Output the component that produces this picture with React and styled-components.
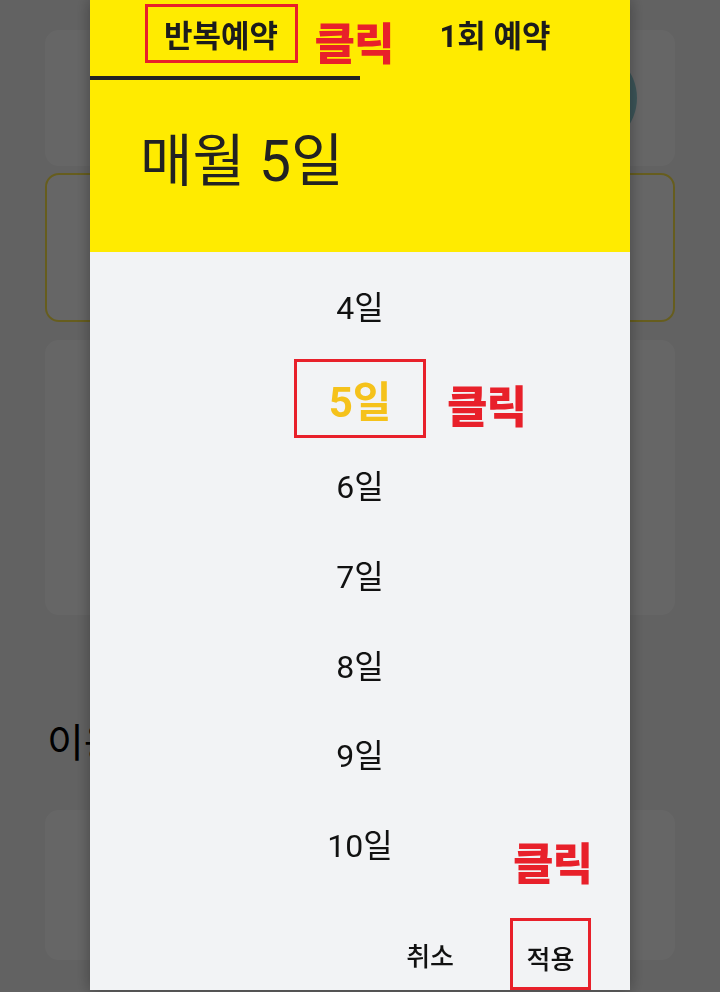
import styled, { createGlobalStyle } from "styled-components";

const GlobalStyle = createGlobalStyle`
  html, body {
    margin: 0;
    padding: 0;
    height: 100%;
    overflow: hidden;
  }
  body {
    font-family: Roboto, "Noto Sans CJK KR", sans-serif;
    color: #1a1a1a;
  }
  * {
    box-sizing: border-box;
  }
`;

// the page that sits behind the dimmed overlay
const Page = styled.div`
  min-height: 100vh;
  padding: 30px 45px 0;
  background: #f5f5f5;
  display: flex;
  flex-direction: column;
`;

const TopCard = styled.div`
  height: 136px;
  background: #fff;
  border-radius: 14px;
  display: flex;
  align-items: center;
  justify-content: flex-end;
  padding-right: 38px;
`;

const RoundButton = styled.div`
  width: 100px;
  height: 100px;
  border-radius: 50%;
  background: #96d4dc;
`;

const OptionCard = styled.div`
  margin-top: 7px;
  height: 149px;
  background: #fff;
  border: 2px solid #ffe94d;
  border-radius: 14px;
`;

const PlainCard = styled.div`
  margin-top: ${(p) => p.$gap}px;
  height: ${(p) => p.$h}px;
  background: #fff;
  border-radius: 14px;
`;

const SectionTitle = styled.h2`
  margin: 100px 0 0 2px;
  font-family: "Noto Sans CJK KR", sans-serif;
  font-size: 40px;
  font-weight: 400;
  line-height: 50px;
  color: #000;
`;

// dimmed overlay + picker dialog
const Overlay = styled.div`
  position: fixed;
  inset: 0;
  background: rgba(0, 0, 0, 0.6);
  display: flex;
  justify-content: center;
  align-items: flex-start;
  overflow: hidden;
`;

const Dialog = styled.div`
  width: 540px;
  background: #f2f3f5;
  box-shadow: 0 0 14px rgba(0, 0, 0, 0.35);
  display: flex;
  flex-direction: column;
`;

const Header = styled.div`
  background: #ffeb00;
  height: 252px;
`;

const Tabs = styled.div`
  display: grid;
  grid-template-columns: 1fr 1fr;
`;

const Tab = styled.div`
  height: 80px;
  padding-bottom: 10px;
  display: flex;
  align-items: center;
  justify-content: center;
  font-size: 31px;
  font-weight: 700;
  color: #1c1c1c;
  border-bottom: 4px solid ${(p) => (p.$active ? "#222" : "transparent")};
`;

const Summary = styled.div`
  padding: 49px 0 0 50px;
  font-size: 57px;
  line-height: 66px;
  color: #222;
`;

const Body = styled.div`
  padding-top: 8px;
  display: flex;
  flex-direction: column;
`;

const DayList = styled.ul`
  list-style: none;
  margin: 0;
  padding: 0;
`;

const DayItem = styled.li`
  height: 89.7px;
  display: flex;
  align-items: center;
  justify-content: center;
  font-size: ${(p) => (p.$selected ? 42 : 32)}px;
  font-weight: ${(p) => (p.$selected ? 700 : 400)};
  color: ${(p) => (p.$selected ? "#f5c21b" : "#111")};
`;

const Actions = styled.div`
  margin-top: 30px;
  padding-right: 39px;
  display: flex;
  justify-content: flex-end;
  align-items: flex-start;
  gap: 44px;
`;

const ActionButton = styled.button`
  height: 66px;
  padding: 8px 12px 0;
  border: none;
  background: none;
  font-family: inherit;
  font-size: 26px;
  font-weight: 500;
  color: #111;
  display: flex;
  align-items: center;
`;

// red annotation marks drawn over the screenshot
const Marked = styled.div`
  position: relative;
  width: ${(p) => p.$w}px;
  height: ${(p) => p.$h}px;
  margin-top: ${(p) => p.$shift || 0}px;
  margin-right: ${(p) => p.$nudge || 0}px;
  border: 3px solid #e8202a;
  display: flex;
  align-items: center;
  justify-content: center;
`;

const Callout = styled.span`
  position: absolute;
  top: ${(p) => p.$top};
  left: ${(p) => p.$left};
  font-family: "Noto Sans CJK KR", sans-serif;
  font-size: 44px;
  font-weight: 900;
  line-height: 44px;
  letter-spacing: -1px;
  color: #e8202a;
  white-space: nowrap;
`;

const days = [4, 5, 6, 7, 8, 9, 10];

export default function App() {
  return (
    <>
      <GlobalStyle />
      <Page>
        <TopCard>
          <RoundButton />
        </TopCard>
        <OptionCard />
        <PlainCard $gap={18} $h={275} />
        <SectionTitle>이용 안내</SectionTitle>
        <PlainCard $gap={45} $h={150} />
      </Page>
      <Overlay>
        <Dialog>
          <Header>
            <Tabs>
              <Tab $active>
                <Marked $w={153} $h={59} $nudge={8}>
                  반복예약
                  <Callout $top="12px" $left="calc(100% + 20px)">
                    클릭
                  </Callout>
                </Marked>
              </Tab>
              <Tab>1회 예약</Tab>
            </Tabs>
            <Summary>매월 5일</Summary>
          </Header>
          <Body>
            <DayList>
              {days.map((d) =>
                d === 5 ? (
                  <DayItem key={d} $selected>
                    <Marked $w={132} $h={79} $shift={7}>
                      {d}일
                      <Callout $top="20px" $left="calc(100% + 24px)">
                        클릭
                      </Callout>
                    </Marked>
                  </DayItem>
                ) : (
                  <DayItem key={d}>{d}일</DayItem>
                )
              )}
            </DayList>
            <Actions>
              <ActionButton>취소</ActionButton>
              <Marked $w={81} $h={72}>
                <ActionButton>적용</ActionButton>
                <Callout $top="-82px" $left="0px">
                  클릭
                </Callout>
              </Marked>
            </Actions>
          </Body>
        </Dialog>
      </Overlay>
    </>
  );
}
